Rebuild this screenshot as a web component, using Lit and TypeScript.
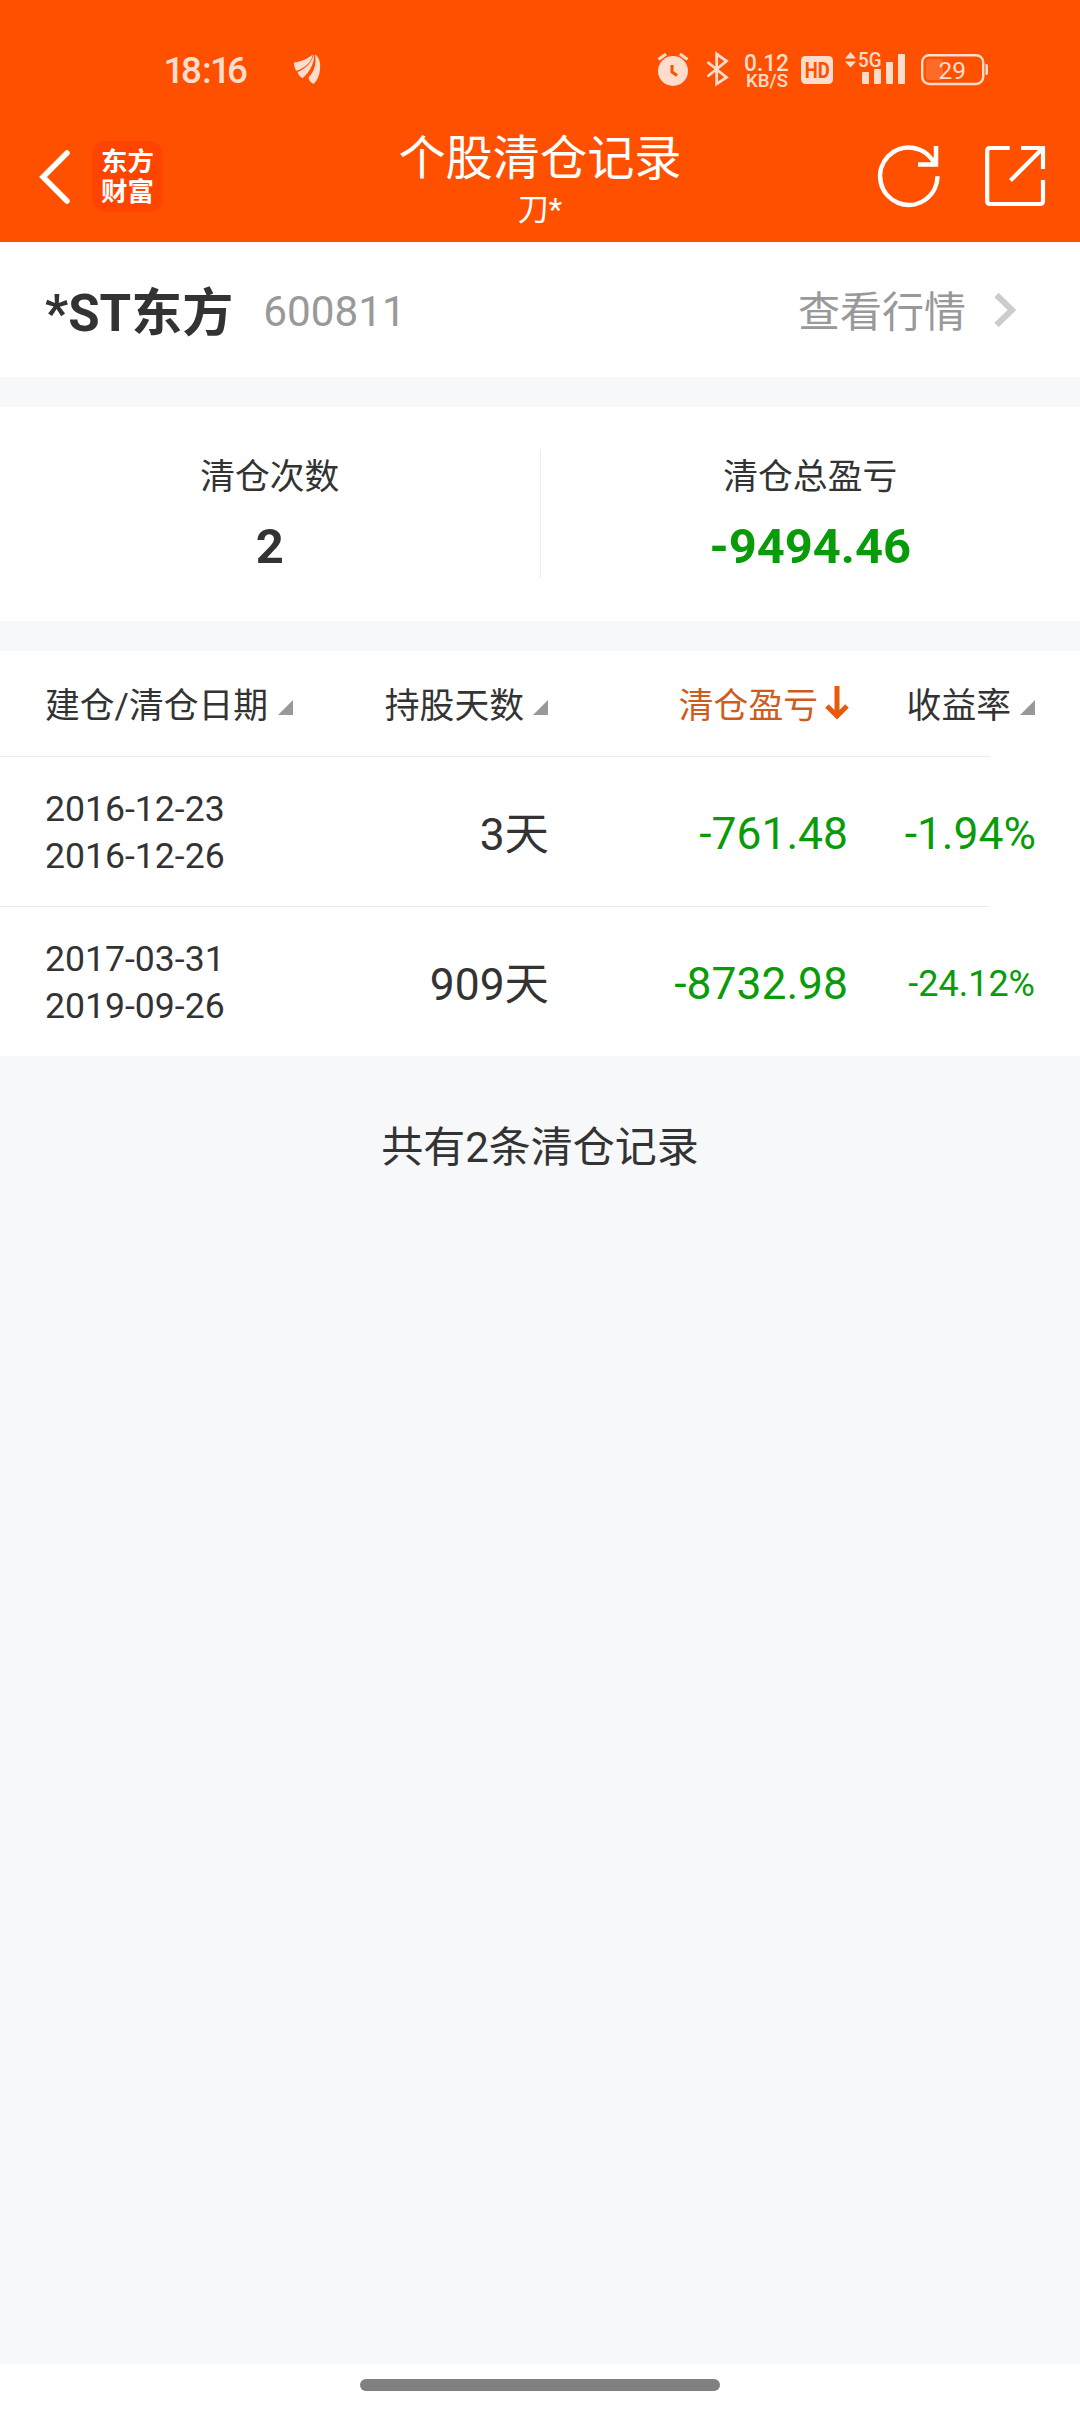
import { LitElement, html, css } from "lit";
import { customElement } from "lit/decorators.js";

interface ClearedRecord {
  opened: string;
  closed: string;
  days: string;
  profit: string;
  rate: string;
  compact?: boolean;
}

const RECORDS: ClearedRecord[] = [
  { opened: "2016-12-23", closed: "2016-12-26", days: "3天", profit: "-761.48", rate: "-1.94%" },
  { opened: "2017-03-31", closed: "2019-09-26", days: "909天", profit: "-8732.98", rate: "-24.12%", compact: true },
];

@customElement("status-bar")
class StatusBar extends LitElement {
  static styles = css`
    :host { display: flex; align-items: center; height: 40px; padding: 50px 92px 0 164px; color: #ffdccb; }
    .time { width: 130px; }
    .spacer { flex: 1; }
    svg { display: block; height: 40px; flex: none; overflow: visible; }
    .alarm { width: 32px; margin-right: 17px; }
    .bt { width: 22px; margin-right: 17px; }
    .speed { width: 43px; margin-right: 13px; }
    .hd { width: 32px; margin-right: 12px; }
    .signal { width: 60px; margin-right: 16px; }
    .battery { width: 67px; }
    .leaf { width: 26px; }
    text { font-family: Roboto, "Noto Sans", sans-serif; fill: currentColor; }
    .clock { font-size: 36.800px; font-weight: 500; }
    .rate { font-size: 24px; font-weight: 500; }
    .unit { font-size: 17.5px; font-weight: 500; }
    .hdtext { font-size: 22px; font-weight: 700; fill: #ff5000; }
    .net { font-size: 20.5px; font-weight: 500; }
    .level { font-size: 24.5px; font-weight: 400; }
  `;
  render() {
    return html`
      <svg class="time" viewBox="164 50 130 40"><text class="clock" x="163.500 181 202 210 227" y="82.500">18:16</text></svg>
      <svg class="leaf" viewBox="294 50 26 40" fill="currentColor">
        <path d="M294 62.500C301 62 308 58.500 312.800 54.500C312 62 304 69 296 70.800Q293.500 66 294 62.500Z" />
        <path d="M313.800 54.500C315 63 309 73 302.500 78.200Q298.500 76 297.600 72C306 69 312 62 313.800 54.500Z" />
        <path d="M315 54.500C320 57 321.500 66 319 75Q317 81 313.500 84Q309.500 82 308.500 77.500C315 71 316.500 63 315 54.500Z" />
      </svg>
      <div class="spacer"></div>
      <svg class="alarm" viewBox="657 50 32 40">
        <circle cx="673" cy="71" r="15" fill="currentColor" />
        <path d="M658.500 59.500L666 54M680 54L687.500 59.500" stroke="currentColor" stroke-width="3.200" />
        <path d="M672 65V72L677 75.500" fill="none" stroke="#ff5000" stroke-width="3" />
      </svg>
      <svg class="bt" viewBox="706 50 22 40">
        <path d="M707.500 62L726.500 77.500L716.700 84V54L726.500 61L707.500 76.500" fill="none" stroke="currentColor" stroke-width="2.800" />
      </svg>
      <svg class="speed" viewBox="745 50 43 40">
        <text class="rate" x="744" y="70.500" textLength="45" lengthAdjust="spacingAndGlyphs">0.12</text>
        <text class="unit" x="746" y="87" textLength="42" lengthAdjust="spacingAndGlyphs">KB/S</text>
      </svg>
      <svg class="hd" viewBox="801 50 32 40">
        <rect x="801" y="56" width="32" height="28" rx="4.500" fill="currentColor" />
        <text class="hdtext" x="804.800" y="78" textLength="25" lengthAdjust="spacingAndGlyphs">HD</text>
      </svg>
      <svg class="signal" viewBox="845 50 60 40" fill="currentColor">
        <path d="M845 58.500L850.500 52L856 58.500ZM845 61.500H856L850.500 67.500Z" />
        <text class="net" x="858" y="67" textLength="23.500" lengthAdjust="spacingAndGlyphs">5G</text>
        <rect x="862" y="72" width="7" height="12" rx="1" />
        <rect x="874" y="69" width="7" height="15" rx="1" />
        <rect x="886" y="62" width="7" height="22" rx="1" />
        <rect x="898" y="54" width="7" height="30" rx="1" />
      </svg>
      <svg class="battery" viewBox="921 50 67 40">
        <rect x="922.200" y="55.200" width="61" height="28.800" rx="7" fill="none" stroke="currentColor" stroke-width="2.400" />
        <rect x="926" y="59" width="17" height="21" rx="3" fill="#ff6a28" />
        <path d="M985.500 64H986.500Q988 64 988 66V73Q988 75 986.500 75H985.500Z" fill="currentColor" />
        <text class="level" x="938.500" y="78.500" textLength="27.500" lengthAdjust="spacingAndGlyphs">29</text>
      </svg>
    `;
  }
}

@customElement("nav-bar")
class NavBar extends LitElement {
  static styles = css`
    :host { display: grid; grid-template-columns: 360px 1fr 360px; height: 152px; color: #fff; }
    .left { display: flex; align-items: flex-start; padding: 51px 0 0 38px; }
    .back { width: 32px; height: 70px; margin-top: 1px; }
    .logo {
      width: 71px; height: 71px; margin-left: 22px; border-radius: 14px; background: #ff4400;
      box-sizing: border-box; padding-top: 4px; text-align: center;
      font: 700 26.5px/30px "Noto Sans CJK SC", sans-serif;
    }
    .logo span { display: block; }
    .titles { text-align: center; padding-top: 39px; }
    .title { font-size: 47.200px; line-height: 60px; white-space: nowrap; }
    .sub { font-size: 31px; line-height: 40px; margin-top: 1px; }
    .right { display: flex; justify-content: flex-end; align-items: flex-start; gap: 43px; padding: 52px 33px 0 0; }
    .right svg { width: 64px; height: 68px; display: block; }
    .back, .right svg { overflow: visible; }
  `;
  render() {
    return html`
      <div class="left">
        <svg class="back" viewBox="38 142 32 70"><path d="M67 153L43 177L67 201" fill="none" stroke="#fff" stroke-width="5.500" stroke-linecap="round" /></svg>
        <div class="logo"><span>东方</span><span>财富</span></div>
      </div>
      <div class="titles">
        <div class="title">个股清仓记录</div>
        <div class="sub">刀*</div>
      </div>
      <div class="right">
        <svg viewBox="876 142 64 68" fill="none" stroke="#fff" stroke-width="4.500">
          <path d="M937.500 176.200A28.700 28.700 0 1 1 935 164.500" />
          <path d="M936 146V164.500H918" />
        </svg>
        <svg viewBox="983 142 64 68" fill="none" stroke="#fff" stroke-width="4.200">
          <path d="M1009.700 148H990Q987.200 148 987.200 151V201Q987.200 204 990 204H1040Q1043 204 1043 201V180" />
          <path d="M1021 148H1043V169M1010.500 180.500L1042 149" />
        </svg>
      </div>
    `;
  }
}

@customElement("app-root")
class AppRoot extends LitElement {
  static styles = css`
    :host {
      display: flex; flex-direction: column; width: 1080px; height: 2412px; overflow: hidden;
      background: #f7f8fa; color: #333; font-family: Roboto, "Noto Sans CJK SC", sans-serif;
    }
    .top { background: #ff5000; height: 242px; flex: none; }
    .stock { display: flex; align-items: center; height: 135px; padding: 0 64px 0 45px; background: #fff; }
    .name { font-size: 51px; font-weight: 700; line-height: 60px; margin-top: 8px; }
    .code { font-size: 42.300px; color: #999; margin-left: 30px; flex: 1; margin-top: 4px; }
    .more { font-size: 42px; line-height: 60px; color: #999; margin-top: 6px; }
    .chev { width: 22px; height: 36px; margin-left: 28px; }
    .summary { display: flex; align-items: center; height: 214px; margin-top: 30px; background: #fff; }
    .stat { flex: 1; text-align: center; }
    .rule { width: 1px; height: 128px; background: #ececec; }
    .label { font-size: 34.800px; line-height: 50px; }
    .value { font-size: 48.900px; font-weight: 700; line-height: 60px; margin-top: 15px; }
    .green { color: #0a9b0a; }
    .table { margin-top: 30px; background: #fff; height: 405px; }
    .row {
      display: grid; grid-template-columns: 248px 255px 299px 188px; height: 149px; align-items: center;
      padding: 0 45px; box-sizing: border-box; font-size: 44.400px;
    }
    .head { height: 105px; font-size: 34.800px; }
    .line { height: 1px; width: 990px; background: #ebebeb; }
    .cell { text-align: right; white-space: nowrap; }
    .th { display: flex; justify-content: flex-end; align-items: center; white-space: nowrap; line-height: 50px; padding-top: 5px; }
    .first { justify-content: space-between; }
    .tri { width: 15px; height: 15px; margin: 3px 0 0 9px; }
    .arrow { width: 24px; height: 34px; margin: -6px -2px 0 7px; }
    .active { color: #cf5c1d; }
    .dates { font-size: 35.600px; line-height: 47px; text-align: left; margin-top: 2px; }
    .days { margin: 6px -1px 0 0; line-height: 60px; }
    .num { margin: 5px -1px 0 0; }
    .compact { font-size: 36px; margin-right: 0; }
    .total { font-size: 42px; line-height: 60px; text-align: center; margin-top: 62px; flex: 1; }
    .home { display: flex; justify-content: center; height: 48px; background: #fff; flex: none; }
    .pill { width: 360px; height: 12px; border-radius: 6px; margin-top: 15px; background: #808080; }
  `;

  private tri() {
    return html`<svg class="tri" viewBox="0 0 15 15"><path d="M15 0V15H0Z" fill="#999" /></svg>`;
  }

  render() {
    return html`
      <div class="top"><status-bar></status-bar><nav-bar></nav-bar></div>
      <div class="stock">
        <div class="name">*ST东方</div>
        <div class="code">600811</div>
        <div class="more">查看行情</div>
        <svg class="chev" viewBox="0 0 22 36"><path d="M2.500 3L18 18L2.500 33" fill="none" stroke="#ccc" stroke-width="6" /></svg>
      </div>
      <div class="summary">
        <div class="stat"><div class="label">清仓次数</div><div class="value">2</div></div>
        <div class="rule"></div>
        <div class="stat"><div class="label">清仓总盈亏</div><div class="value green">-9494.46</div></div>
      </div>
      <div class="table">
        <div class="row head">
          <div class="th first">建仓/清仓日期${this.tri()}</div>
          <div class="th">持股天数${this.tri()}</div>
          <div class="th active">清仓盈亏
            <svg class="arrow" viewBox="0 0 24 34" fill="none" stroke="#e8590c" stroke-width="5"><path d="M12 0V30M2 20L12 30L22 20" /></svg>
          </div>
          <div class="th">收益率${this.tri()}</div>
        </div>
        ${RECORDS.map(
          (r) => html`
            <div class="line"></div>
            <div class="row">
              <div class="cell dates"><div>${r.opened}</div><div>${r.closed}</div></div>
              <div class="cell days">${r.days}</div>
              <div class="cell num green">${r.profit}</div>
              <div class="cell num green ${r.compact ? "compact" : ""}">${r.rate}</div>
            </div>
          `
        )}
      </div>
      <div class="total">共有2条清仓记录</div>
      <div class="home"><div class="pill"></div></div>
    `;
  }
}
